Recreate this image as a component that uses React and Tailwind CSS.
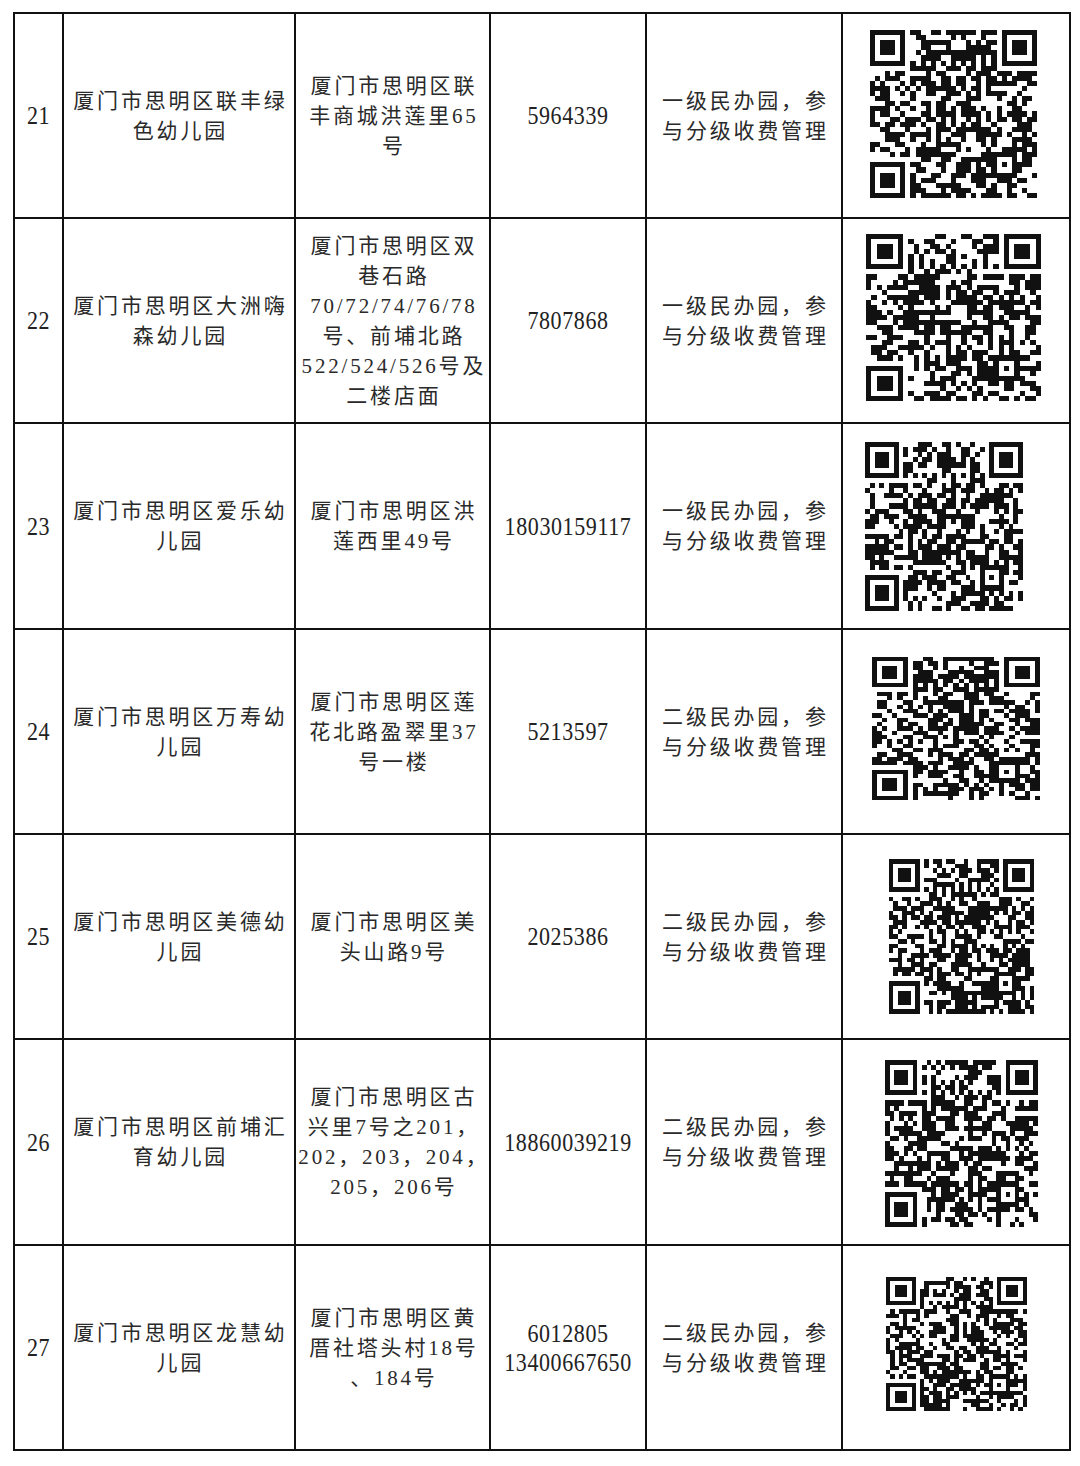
const rows = [
  {
    no: '21',
    name: ['厦门市思明区联丰绿', '色幼儿园'],
    addr: ['厦门市思明区联', '丰商城洪莲里65', '号'],
    phone: ['5964339'],
    level: '一级',
    qr: { w: 167, h: 168, dx: -3, dy: -2, seed: 21 },
  },
  {
    no: '22',
    name: ['厦门市思明区大洲嗨', '森幼儿园'],
    addr: ['厦门市思明区双', '巷石路', '70/72/74/76/78', '号、前埔北路', '522/524/526号及', '二楼店面'],
    phone: ['7807868'],
    level: '一级',
    qr: { w: 175, h: 167, dx: -3, dy: -3, seed: 22 },
  },
  {
    no: '23',
    name: ['厦门市思明区爱乐幼', '儿园'],
    addr: ['厦门市思明区洪', '莲西里49号'],
    phone: ['18030159117'],
    level: '一级',
    qr: { w: 158, h: 169, dx: -12, dy: 0, seed: 23 },
  },
  {
    no: '24',
    name: ['厦门市思明区万寿幼', '儿园'],
    addr: ['厦门市思明区莲', '花北路盈翠里37', '号一楼'],
    phone: ['5213597'],
    level: '二级',
    qr: { w: 168, h: 143, dx: 0, dy: -3, seed: 24 },
  },
  {
    no: '25',
    name: ['厦门市思明区美德幼', '儿园'],
    addr: ['厦门市思明区美', '头山路9号'],
    phone: ['2025386'],
    level: '二级',
    qr: { w: 145, h: 155, dx: 5, dy: 0, seed: 25 },
  },
  {
    no: '26',
    name: ['厦门市思明区前埔汇', '育幼儿园'],
    addr: ['厦门市思明区古', '兴里7号之201，', '202，203，204，', '205，206号'],
    phone: ['18860039219'],
    level: '二级',
    qr: { w: 153, h: 167, dx: 5, dy: 1, seed: 26 },
  },
  {
    no: '27',
    name: ['厦门市思明区龙慧幼', '儿园'],
    addr: ['厦门市思明区黄', '厝社塔头村18号', '、184号'],
    phone: ['6012805', '13400667650'],
    level: '二级',
    qr: { w: 141, h: 134, dx: 0, dy: -4, seed: 27 },
  },
]

function rng(seed) {
  let a = seed * 2654435761
  return () => {
    a |= 0
    a = (a + 0x6d2b79f5) | 0
    let t = Math.imul(a ^ (a >>> 15), 1 | a)
    t = (t + Math.imul(t ^ (t >>> 7), 61 | t)) ^ t
    return ((t ^ (t >>> 14)) >>> 0) / 4294967296
  }
}

// fake qr grid: finders, timing, alignment + random data
function qrPath(seed) {
  const n = 33
  const rand = rng(seed)
  const g = Array.from({ length: n }, () => Array(n).fill(null))
  const finder = (ox, oy) => {
    for (let y = -1; y <= 7; y++)
      for (let x = -1; x <= 7; x++) {
        const X = ox + x, Y = oy + y
        if (X < 0 || Y < 0 || X >= n || Y >= n) continue
        const ring = Math.max(Math.abs(x - 3), Math.abs(y - 3))
        g[Y][X] = ring === 3 || ring <= 1
      }
  }
  finder(0, 0)
  finder(n - 7, 0)
  finder(0, n - 7)
  for (let y = -2; y <= 2; y++)
    for (let x = -2; x <= 2; x++) {
      const r = Math.max(Math.abs(x), Math.abs(y))
      g[26 + y][26 + x] = r !== 1
    }
  for (let i = 8; i < n - 8; i++) {
    if (g[6][i] === null) g[6][i] = i % 2 === 0
    if (g[i][6] === null) g[i][6] = i % 2 === 0
  }
  let d = ''
  for (let y = 0; y < n; y++)
    for (let x = 0; x < n; x++) {
      const v = g[y][x] === null ? rand() < 0.55 : g[y][x]
      if (v) d += `M${x} ${y}h1v1h-1z`
    }
  return d
}

function QR({ w, h, dx, dy, seed }) {
  return (
    <svg
      width={w}
      height={h}
      viewBox="0 0 33 33"
      preserveAspectRatio="none"
      shapeRendering="crispEdges"
      style={{ transform: `translate(${dx}px, ${dy}px)` }}
    >
      <path d={qrPath(seed)} fill="#111" />
    </svg>
  )
}

const cell = 'bg-white flex items-center justify-center text-center'
const cjk = "font-['Liberation_Serif','Noto_Sans_CJK_SC',serif] text-[21px] leading-[30px] tracking-[2.8px] pl-[2.8px] text-[#2a2a2a]"
const num = "inline-block scale-y-[1.18] font-['Liberation_Serif',serif] text-[22px] leading-[29px] tracking-[0.6px] text-[#222]"

function Lines({ lines, cls }) {
  return (
    <div>
      {lines.map((l, i) => (
        <div key={i} className={cls + ' block whitespace-nowrap'}>
          {l}
        </div>
      ))}
    </div>
  )
}

export default function App() {
  return (
    <div className="min-h-[1466px] w-[1080px] bg-white pt-[12px] pl-[13px]">
      <div className="grid w-[1058px] grid-cols-[47px_230px_193px_154px_194px_226px] grid-rows-[203px_203px_204px_203px_203px_204px_203px] gap-[2px] bg-[#111] p-[2px]">
        {rows.map((r) => [
          <div key={r.no + 'a'} className={cell}>
            <span className={num}>{r.no}</span>
          </div>,
          <div key={r.no + 'b'} className={cell}>
            <Lines lines={r.name} cls={cjk} />
          </div>,
          <div key={r.no + 'c'} className={cell}>
            <Lines lines={r.addr} cls={cjk} />
          </div>,
          <div key={r.no + 'd'} className={cell}>
            <Lines lines={r.phone} cls={num} />
          </div>,
          <div key={r.no + 'e'} className={cell}>
            <Lines lines={[r.level + '民办园，参', '与分级收费管理']} cls={cjk} />
          </div>,
          <div key={r.no + 'f'} className={cell}>
            <QR {...r.qr} />
          </div>,
        ])}
      </div>
    </div>
  )
}
